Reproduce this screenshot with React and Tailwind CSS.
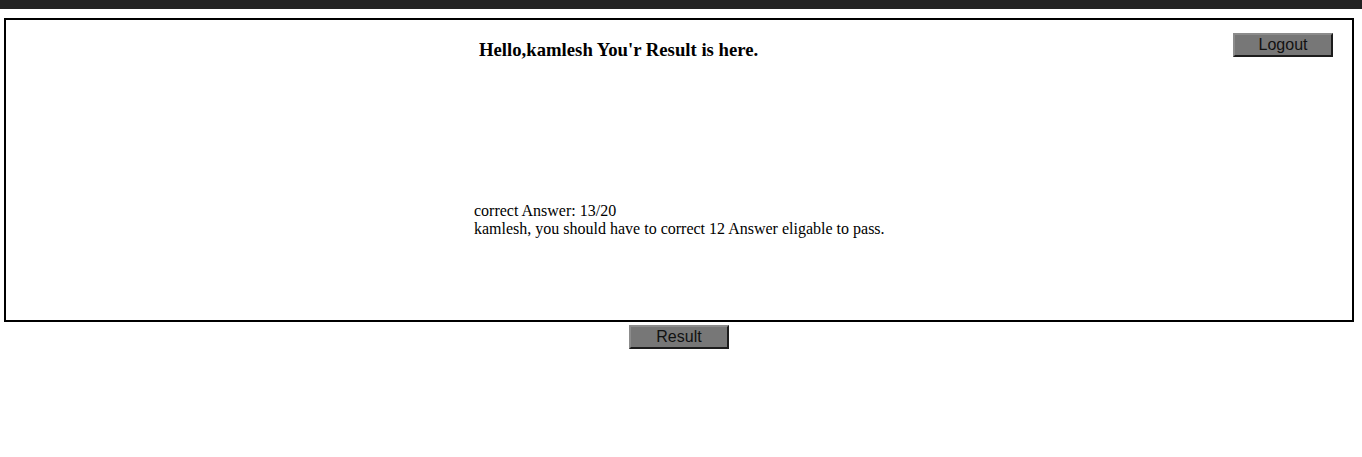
import React from "react";

function GrayButton({ children }) {
  return (
    <button
      className="w-[100px] h-[24px] bg-[#777777] border-2 border-t-[#8c8c8c] border-l-[#8c8c8c] border-r-[#1c1c1c] border-b-[#1c1c1c] text-[16px] leading-[18px] text-[#111] font-['Liberation_Sans',Arial,sans-serif]"
    >
      {children}
    </button>
  );
}

export default function App() {
  const user = "kamlesh";
  const correct = 13;
  const total = 20;
  const needed = 12;

  return (
    <div className="w-[1362px] h-[457px] bg-white font-['Liberation_Serif','Times_New_Roman',serif] text-black">
      <div className="h-[9px] bg-[#222222]" />

      <div className="mt-[9px] ml-[4px] w-[1350px] h-[304px] border-2 border-black flex flex-col">
        <div className="flex items-start">
          <h3 className="ml-[473px] mt-[19px] text-[18.72px] leading-[22px] font-bold">
            Hello,{user} You'r Result is here.
          </h3>
          <div className="flex-1" />
          <div className="mt-[13px] mr-[19px]">
            <GrayButton>Logout</GrayButton>
          </div>
        </div>

        <div className="ml-[468px] mt-[141px] text-[16px] leading-[18px]">
          <div>
            correct Answer: {correct}/{total}
          </div>
          <div>
            {user}, you should have to correct {needed} Answer eligable to pass.
          </div>
        </div>
      </div>

      <div className="mt-[3px] flex justify-center pl-[-0px]">
        <div className="ml-[-4px]">
          <GrayButton>Result</GrayButton>
        </div>
      </div>
    </div>
  );
}
